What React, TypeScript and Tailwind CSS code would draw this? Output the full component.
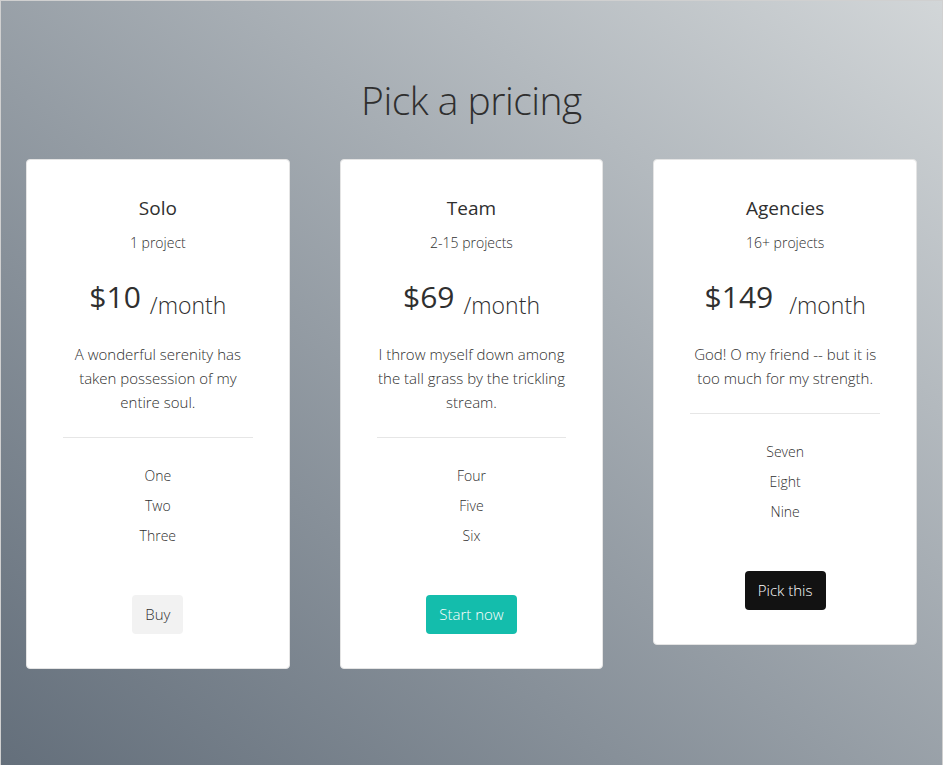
const plans = [
  {
    name: "Solo",
    projects: "1 project",
    price: "$10",
    gap: "gap-[9px]",
    text: "A wonderful serenity has taken possession of my entire soul.",
    features: ["One", "Two", "Three"],
    cta: "Buy",
    btn: "bg-[#f2f2f2] text-[#333]",
  },
  {
    name: "Team",
    projects: "2-15 projects",
    price: "$69",
    gap: "gap-[9px]",
    text: "I throw myself down among the tall grass by the trickling stream.",
    features: ["Four", "Five", "Six"],
    cta: "Start now",
    btn: "bg-[#14bdac] text-white",
  },
  {
    name: "Agencies",
    projects: "16+ projects",
    price: "$149",
    gap: "gap-[16px]",
    text: "God! O my friend -- but it is too much for my strength.",
    features: ["Seven", "Eight", "Nine"],
    cta: "Pick this",
    btn: "bg-[#121212] text-white",
  },
];

export default function App() {
  return (
    <main
      className="h-[765px] overflow-hidden border-x border-t border-[#d0d0d0] bg-linear-to-tr from-[#646f7b] to-[#d2d6d8] px-[25px] pt-[75px] text-[#2f2f2f]"
      style={{ fontFamily: '"Open Sans", "Noto Sans", sans-serif' }}
    >
      <h1 className="mb-[35px] text-center text-[39px] leading-[48px] font-light tracking-[-0.5px]">
        Pick a pricing
      </h1>
      <div className="grid grid-cols-3 items-start gap-[50px]">
        {plans.map((p) => (
          <div
            key={p.name}
            className="flex flex-col items-center rounded-[4px] border border-[#e4e4e4] bg-white px-[36px] pt-[34px] pb-[34px] text-center"
          >
            <h2 className="text-[19px] leading-[28px] font-normal">{p.name}</h2>
            <p className="mt-[9px] text-[14px] leading-[24px] font-light">{p.projects}</p>
            <div className={`mt-[18px] flex h-[48px] items-baseline justify-center ${p.gap}`}>
              <span className="text-[30px] leading-[48px] font-normal">{p.price}</span>
              <span className="relative top-[6px] text-[23px] font-light">/month</span>
            </div>
            <p className="mt-[21px] text-[15px] leading-[24px] font-light">{p.text}</p>
            <hr className="mt-[23px] w-full border-t border-[#e6e6e6]" />
            <ul className="mt-[23px] text-[14px] leading-[30px] font-light">
              {p.features.map((f) => (
                <li key={f}>{f}</li>
              ))}
            </ul>
            <button
              className={`mt-[44px] rounded-[4px] px-[13px] py-[7px] text-[15px] leading-[25px] font-light ${p.btn}`}
            >
              {p.cta}
            </button>
          </div>
        ))}
      </div>
    </main>
  );
}
